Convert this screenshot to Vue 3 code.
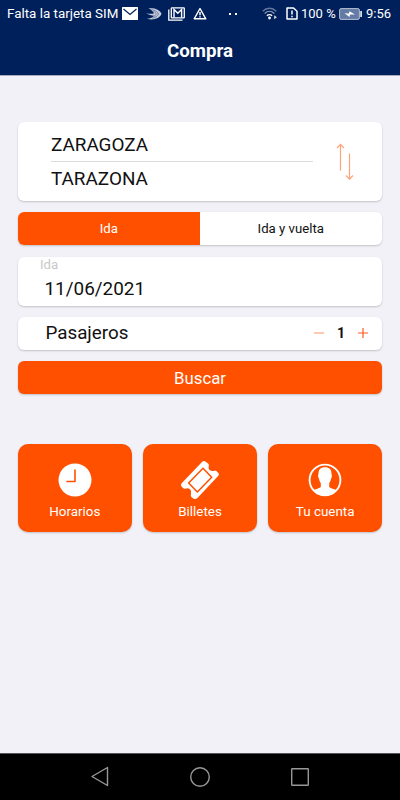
<script setup>
import { ref } from 'vue'

const origin = ref('ZARAGOZA')
const destination = ref('TARAZONA')
const roundTrip = ref(false)
const passengers = ref(1)

function swap() {
  const previous = origin.value
  origin.value = destination.value
  destination.value = previous
}
</script>

<template>
  <div class="screen">
    <header>
      <div class="status">
        <span class="carrier">Falta la tarjeta SIM</span>
        <svg class="mail" width="16" height="13" viewBox="0 0 16 13"><rect width="16" height="13" rx=".6" fill="#fff" /><path d="M1.5 2 8 7.5 14.5 2" fill="none" stroke="#00205b" stroke-width="1.2" /></svg>
        <svg class="swift" width="16" height="12" viewBox="0 0 16 12"><path d="M2.500.5C8-.2 14 1.500 15.500 6 13.500 10.500 7.500 12.500.8 10.800 4 10.700 6.500 9.700 8 7.800 5.500 7.500 3 6.800 0 5.200c3 .6 5.500.7 8 .2C7 3 5 1.400 2.500.5Z" fill="#c3ccdc" /><path d="M5.500 1.500c4 .8 6.500 2.500 7 4.700-1 2-3.500 3.500-6.500 4M7.500 3.200c1.600.8 2.500 1.800 2.800 3-.6 1-1.500 1.900-2.800 2.500" fill="none" stroke="#3f5580" stroke-width=".6" /></svg>
        <svg class="gmail" width="17" height="14" viewBox="0 0 17 14" fill="none" stroke="#fff"><path d="M.8 2.500v10.700h13.700" stroke-width="1.300" /><rect x="3.300" y=".8" width="13" height="10" rx=".6" stroke-width="1.300" /><path d="M6 10.500V2.500l3.800 3.700 3.800-3.700v8" stroke-width="1.400" /></svg>
        <svg class="warning" width="14" height="13" viewBox="0 0 14 13" fill="none" stroke="#fff"><path d="M7 1.500 12.800 11.800H1.200Z" stroke-width="1.400" stroke-linejoin="round" /><path d="M7 5v3.200M7 9.200v1.300" stroke-width="1.500" /></svg>
        <span class="dots"><i></i><i></i></span>
        <svg class="wifi" width="16" height="13" viewBox="0 0 16 13" fill="none" stroke-width="1.300"><path d="M.7 4.300C4.700.2 10.300.2 14.300 4.300" stroke="#65779c" /><path d="M2.700 6.500c2.900-2.800 6.700-2.800 9.600 0" stroke="#8c9ab5" /><path d="M4.900 8.700c1.500-1.500 3.700-1.500 5.200 0" stroke="#fff" /><circle cx="7.500" cy="11" r="1.400" fill="#fff" /><path d="m12.200 8.300 2.600 2-2.600 2Z" fill="#d5dbe7" /></svg>
        <svg class="sim" width="12" height="13" viewBox="0 0 12 13" fill="none" stroke="#fff"><path d="M1 1h6.500L11 4.300V12H1Z" stroke-width="1.500" stroke-linejoin="round" /><path d="M6 3.600v3.800M6 8.800v1.500" stroke-width="1.500" /></svg>
        <span class="percent">100 %</span>
        <svg class="battery" width="23" height="12" viewBox="0 0 23 12"><rect x=".6" y=".6" width="19.800" height="10.800" rx="1.500" fill="#647ba5" stroke="#b5bfd0" stroke-width="1" /><path d="M21.200 3h1.800v6h-1.800Z" fill="#d9dfe9" /><path d="m5.500 5.200 4.500.3.500-2.200 5.500 3.200-5 .1-.5 2.400Z" fill="#fff" /></svg>
        <span class="time">9:56</span>
      </div>
      <h1>Compra</h1>
    </header>

    <main>
      <section class="card route">
        <div class="stops">
          <div class="stop first">{{ origin }}</div>
          <div class="stop">{{ destination }}</div>
        </div>
        <svg class="swap" width="18" height="37" viewBox="0 0 18 37" fill="none" stroke="#ffa47a" stroke-width="1.200" @click="swap"><path d="M4.500 27.500V1.500M1 5 4.500 1.300 8 5M13.500 10.500v25M10 32.500l3.500 3.700 3.500-3.700" /></svg>
      </section>

      <section class="card tabs">
        <div class="tab" :class="{ active: !roundTrip }" @click="roundTrip = false">Ida</div>
        <div class="tab" :class="{ active: roundTrip }" @click="roundTrip = true">Ida y vuelta</div>
      </section>

      <section class="card date">
        <div class="label">Ida</div>
        <div class="value">11/06/2021</div>
      </section>

      <section class="card people">
        <span class="name">Pasajeros</span>
        <svg width="10" height="10" viewBox="0 0 10 10" @click="passengers = Math.max(1, passengers - 1)"><path d="M0 5h10" stroke="#ffa47a" stroke-width="1.200" /></svg>
        <b>{{ passengers }}</b>
        <svg width="10" height="10" viewBox="0 0 10 10" @click="passengers++"><path d="M0 5h10M5 0v10" stroke="#ff5a1c" stroke-width="1.200" /></svg>
      </section>

      <div class="card search">Buscar</div>

      <nav class="tiles">
        <div class="tile">
          <svg width="40" height="40" viewBox="0 0 40 40"><circle cx="20" cy="20" r="16.500" fill="#fff" /><path d="M20 10v11.500h-8" fill="none" stroke="#ff5000" stroke-width="1.600" stroke-linecap="round" stroke-linejoin="round" /></svg>
          <span class="schedules">Horarios</span>
        </div>
        <div class="tile">
          <svg width="40" height="40" viewBox="135 74 120 120"><path d="M140 144 201 80Q206 75 212 79L220 85Q223 88 221 93Q219 101 225 105Q230 109 238 106Q242 105 245 108L250 113Q254 117 250 121L188 187Q182 193 176 190L169 185Q166 182 168 176Q171 168 165 162Q159 157 151 160Q147 161 144 158L139 153Q136 149 140 144Z" fill="#fff" /><path d="M161 143 204 99 230 126 187 170Z" fill="none" stroke="#ff5000" stroke-width="4.500" stroke-linejoin="round" /></svg>
          <span class="tickets">Billetes</span>
        </div>
        <div class="tile">
          <svg width="40" height="40" viewBox="0 0 40 40"><circle cx="20" cy="20" r="15.400" fill="none" stroke="#fff" stroke-width="1.900" /><path d="M20 7.300c4.500 0 6.700 2.500 6.500 7 .7.500.5 3-.5 4.500-.4 2-1 3.400-1.800 4.400v3.500c.5 1.500 4.500 2 7.700 3.500-3 3.500-7 5.600-11.900 5.600S11.100 33.700 8.100 30.200c3.200-1.500 7.200-2 7.700-3.500v-3.500c-.8-1-1.400-2.400-1.800-4.400-1-1.500-1.200-4-.5-4.500-.2-4.500 2-7 6.500-7Z" fill="#fff" /></svg>
          <span class="account">Tu cuenta</span>
        </div>
      </nav>
    </main>

    <footer>
      <svg width="20" height="22" viewBox="0 0 20 22"><path d="M17.500 1.500v18L2 10.500Z" /></svg>
      <svg width="22" height="22" viewBox="0 0 22 22"><circle cx="11" cy="11" r="9.300" /></svg>
      <svg width="20" height="20" viewBox="0 0 20 20"><rect x="1.700" y="1.700" width="16.600" height="16.600" rx=".5" /></svg>
    </footer>
  </div>
</template>

<style>
body {
  margin: 0;
}
</style>

<style scoped>
.screen {
  box-sizing: border-box;
  display: flex;
  flex-direction: column;
  width: 400px;
  height: 800px;
  background: #f2f1f7;
  font-family: Roboto, "Liberation Sans", sans-serif;
  color: #111;
  overflow: hidden;
}
svg {
  display: block;
  flex: none;
}
header {
  height: 76px;
  flex: none;
  background: #00205b;
  border-bottom: 1px solid #aaa9bf;
  box-sizing: border-box;
  color: #fff;
}
.status {
  display: flex;
  align-items: center;
  height: 27px;
  padding-left: 7px;
  font-size: 13px;
  line-height: 27px;
  white-space: nowrap;
}
.carrier {
  width: 111px;
  font-size: 13.400px;
}
.mail {
  margin-left: 4px;
}
.swift {
  margin-left: 8px;
}
.gmail {
  margin-left: 6px;
}
.warning {
  margin-left: 8px;
}
.dots {
  display: flex;
  gap: 4px;
  margin-left: 22px;
}
.dots i {
  width: 2px;
  height: 2px;
  background: #fff;
}
.wifi {
  margin-left: 25px;
}
.sim {
  margin-left: 8px;
}
.percent {
  width: 35px;
  margin-left: 3px;
}
.battery {
  margin-left: 3px;
}
.time {
  margin-left: 4px;
}
h1 {
  margin: 11px 0 0;
  font-size: 18.700px;
  line-height: 26px;
  font-weight: 700;
  text-align: center;
}
main {
  flex: 1;
  display: flex;
  flex-direction: column;
  padding: 46px 18px 0;
}
.card {
  box-sizing: border-box;
  border-radius: 6px;
  background: #fff;
  box-shadow: 0 1px 2px rgba(0, 0, 0, 0.2);
}
.route {
  display: flex;
  height: 79px;
  padding: 5px 27px 0 33px;
}
.stops {
  width: 262px;
}
.stop {
  height: 34px;
  font-size: 18.900px;
  line-height: 34px;
}
.first {
  line-height: 35px;
  border-bottom: 1px solid #dcdcdc;
}
.swap {
  margin: 16px 0 0 23px;
}
.tabs {
  display: flex;
  height: 33px;
  margin-top: 11px;
  overflow: hidden;
}
.tab {
  flex: 1;
  font-size: 13.200px;
  line-height: 33px;
  text-align: center;
}
.tab.active {
  flex: none;
  width: 181.500px;
  background: #ff5000;
  color: #fff;
}
.date {
  height: 49px;
  margin-top: 11.500px;
  padding-left: 22px;
}
.label {
  height: 16px;
  color: #c8c8c8;
  font-size: 13.200px;
  line-height: 16px;
}
.value {
  padding-left: 4.500px;
  font-size: 18.900px;
  line-height: 32px;
}
.people {
  display: flex;
  align-items: center;
  height: 33px;
  margin-top: 11px;
  padding: 0 14px 0 27.500px;
}
.name {
  flex: 1;
  font-size: 18.800px;
  line-height: 32px;
}
.people b {
  width: 34px;
  font-size: 14px;
  text-align: center;
}
.search {
  height: 33px;
  margin-top: 11.500px;
  background: #ff5000;
  color: #fff;
  font-size: 16.800px;
  line-height: 34px;
  text-align: center;
}
.tiles {
  display: grid;
  grid-template-columns: repeat(3, 1fr);
  gap: 11.500px;
  margin-top: 49.500px;
}
.tile {
  box-sizing: border-box;
  display: flex;
  flex-direction: column;
  align-items: center;
  height: 88.500px;
  padding-top: 16.500px;
  border-radius: 10px;
  background: #ff5000;
  box-shadow: 0 1px 2px rgba(0, 0, 0, 0.2);
  color: #fff;
  font-size: 13.400px;
}
.tile span {
  line-height: 23px;
}
footer {
  box-sizing: border-box;
  display: flex;
  align-items: center;
  height: 47px;
  flex: none;
  padding-left: 89.500px;
  border-top: 1px solid #55555c;
  background: #000;
  fill: none;
  stroke: #989898;
  stroke-width: 1.400;
  stroke-linejoin: round;
  gap: 79px;
}
</style>
